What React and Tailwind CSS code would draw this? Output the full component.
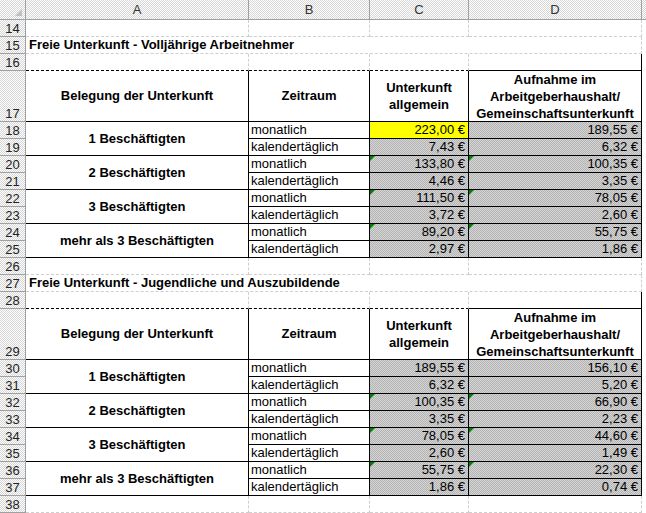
import React from "react";

const hdrBg = "bg-[repeating-conic-gradient(#d6d6d6_0_25%,#ffffff_0_50%)] bg-[length:2px_2px]";
const grayBg = "bg-[repeating-conic-gradient(#b4b4b4_0_25%,#d4d4d4_0_50%)] bg-[length:2px_2px]";
const grid = "border-r border-b border-dashed border-r-[#cfcfcf] border-b-[#cfcfcf]";
const tbl = "border-r border-b border-solid border-black";

function Tri() {
  return <div className="absolute top-0 left-0 w-0 h-0 border-t-[5px] border-t-[#008000] border-r-[5px] border-r-transparent" />;
}

function RowHead({ n, end }) {
  return (
    <div className={`${hdrBg} border-r border-b border-[#a0a0a0] flex ${end ? "items-end" : "items-center"} justify-center text-[13px] text-[#222] leading-[15px]`}>
      {n}
    </div>
  );
}

function Table({ title, start, data }) {
  const rows = [];
  rows.push(
    <React.Fragment key="b1">
      <RowHead n={start} />
      <div className={grid} /><div className={grid} /><div className={grid} /><div className={grid} /><div />
    </React.Fragment>
  );
  rows.push(
    <React.Fragment key="t">
      <RowHead n={start + 1} />
      <div className={`${grid} col-span-4 font-bold text-[13px] flex items-center pl-[3px] whitespace-nowrap`}>{title}</div>
      <div />
    </React.Fragment>
  );
  rows.push(
    <React.Fragment key="b2">
      <RowHead n={start + 2} />
      <div className="border-r border-dashed border-r-[#cfcfcf] border-b border-b-black" />
      <div className="border-r border-dashed border-r-[#cfcfcf] border-b border-b-black" />
      <div className="border-r border-dashed border-r-[#cfcfcf] border-b border-b-black" />
      <div className="border-b border-b-black border-r border-r-black" />
      <div />
    </React.Fragment>
  );
  rows.push(
    <React.Fragment key="h">
      <RowHead n={start + 3} end />
      <div className={`${tbl} font-bold text-[13px] flex items-center justify-center text-center`}>Belegung der Unterkunft</div>
      <div className={`${tbl} font-bold text-[13px] flex items-center justify-center text-center`}>Zeitraum</div>
      <div className={`${tbl} font-bold text-[13px] flex items-center justify-center text-center leading-[17px]`}>Unterkunft<br />allgemein</div>
      <div className={`${tbl} font-bold text-[13px] flex items-center justify-center text-center leading-[17px]`}>Aufnahme im<br />Arbeitgeberhaushalt/<br />Gemeinschaftsunterkunft</div>
      <div />
    </React.Fragment>
  );
  data.forEach((g, i) => {
    const r = start + 4 + i * 2;
    rows.push(
      <React.Fragment key={"g" + i}>
        <RowHead n={r} />
        <div className={`${tbl} row-span-2 font-bold text-[13px] flex items-center justify-center`}>{g[0]}</div>
        <div className={`${tbl} text-[13px] flex items-center pl-[2px]`}>monatlich</div>
        <div className={`${tbl} ${i === 0 && g[5] ? "bg-[#ffff00]" : grayBg} relative text-[13px] flex items-center justify-end pr-[3px]`}>{i > 0 && <Tri />}{g[1]}</div>
        <div className={`${tbl} ${grayBg} relative text-[13px] flex items-center justify-end pr-[3px]`}>{i > 0 && <Tri />}{g[2]}</div>
        <div />
        <RowHead n={r + 1} />
        <div className={`${tbl} text-[13px] flex items-center pl-[2px]`}>kalendertäglich</div>
        <div className={`${tbl} ${grayBg} text-[13px] flex items-center justify-end pr-[3px]`}>{g[3]}</div>
        <div className={`${tbl} ${grayBg} text-[13px] flex items-center justify-end pr-[3px]`}>{g[4]}</div>
        <div />
      </React.Fragment>
    );
  });
  return rows;
}

export default function App() {
  const d1 = [
    ["1 Beschäftigten", "223,00 €", "189,55 €", "7,43 €", "6,32 €", true],
    ["2 Beschäftigten", "133,80 €", "100,35 €", "4,46 €", "3,35 €"],
    ["3 Beschäftigten", "111,50 €", "78,05 €", "3,72 €", "2,60 €"],
    ["mehr als 3 Beschäftigten", "89,20 €", "55,75 €", "2,97 €", "1,86 €"],
  ];
  const d2 = [
    ["1 Beschäftigten", "189,55 €", "156,10 €", "6,32 €", "5,20 €"],
    ["2 Beschäftigten", "100,35 €", "66,90 €", "3,35 €", "2,23 €"],
    ["3 Beschäftigten", "78,05 €", "44,60 €", "2,60 €", "1,49 €"],
    ["mehr als 3 Beschäftigten", "55,75 €", "22,30 €", "1,86 €", "0,74 €"],
  ];
  return (
    <div className="w-[646px] h-[513px] overflow-hidden bg-white text-black font-[Liberation_Sans,Arial,sans-serif]">
      <div className="grid grid-cols-[26px_223px_121px_99px_173px_4px] grid-rows-[20px_17px_17px_17px_51px_repeat(8,17px)_17px_17px_17px_51px_repeat(8,17px)_17px]">
        <div className={`${hdrBg} border-r border-b border-[#a0a0a0] relative`}>
          <div className="absolute right-[3px] bottom-[3px] w-0 h-0 border-b-[7px] border-b-[#c0c0c0] border-l-[7px] border-l-transparent" />
        </div>
        {["A", "B", "C", "D"].map((c) => (
          <div key={c} className={`${hdrBg} border-r border-b border-[#a0a0a0] flex items-center justify-center text-[13px] text-[#333]`}>{c}</div>
        ))}
        <div className={`${hdrBg} border-b border-[#a0a0a0]`} />
        {Table({ title: "Freie Unterkunft - Volljährige Arbeitnehmer", start: 14, data: d1 })}
        {Table({ title: "Freie Unterkunft - Jugendliche und Auszubildende", start: 26, data: d2 })}
        <RowHead n={38} />
        <div className={grid} /><div className={grid} /><div className={grid} /><div className={grid} /><div />
      </div>
    </div>
  );
}
